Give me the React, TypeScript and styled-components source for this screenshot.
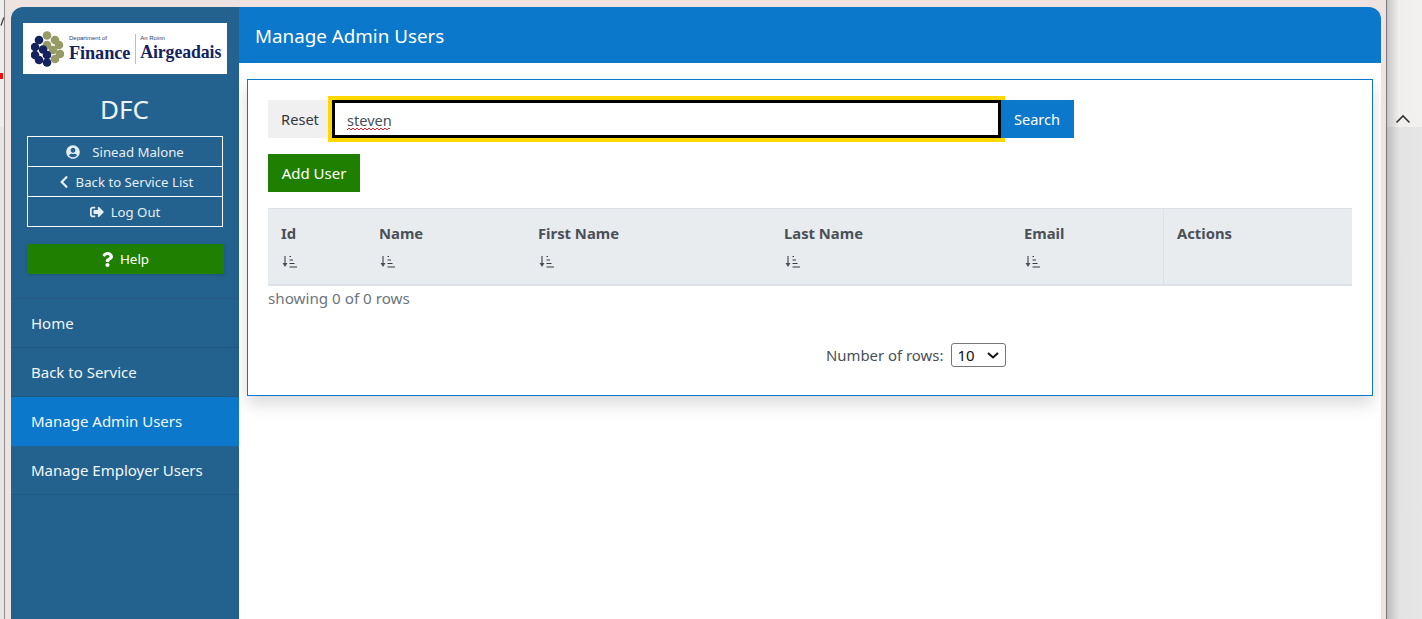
import React from "react";
import styled, { createGlobalStyle } from "styled-components";
import { FaUserCircle, FaChevronLeft, FaSignOutAlt, FaQuestion } from "react-icons/fa";

const Global = createGlobalStyle`
  html, body { margin: 0; padding: 0; height: 619px; overflow: hidden; background: #efe3e1; }
  #root { height: 619px; }
  * { box-sizing: border-box; }
`;

const Page = styled.div`
  position: relative;
  display: flex;
  width: 1422px;
  height: 619px;
  overflow: hidden;
  font-family: "Noto Sans", "Open Sans", sans-serif;
  font-size: 15px;
`;
const LeftStrip = styled.div`
  width: 5px;
  flex: none;
  display: flex;
  flex-direction: column;
  border-right: 1px solid #8f8f8f;
`;
const LeftTop = styled.div`
  height: 127px;
  background: #eeeeec;
`;
const LeftBottom = styled.div`
  flex: 1;
  background: #e6e6e6;
`;
const RedMark = styled.div`
  position: absolute;
  left: 0;
  top: 73px;
  width: 3px;
  height: 6px;
  background: #e81010;
`;
const CornerMark = styled.svg`
  position: absolute;
  left: 0;
  top: 17px;
`;
const Stage = styled.div`
  flex: 1;
  min-width: 0;
  padding: 7px 5px 0 6px;
  background: #efe3e1;
`;
const RightStrip = styled.div`
  width: 36px;
  flex: none;
  display: flex;
  flex-direction: column;
  border-left: 1px solid #77777a;
`;
const RightTop = styled.div`
  height: 127px;
  padding: 0 0 3px 8px;
  display: flex;
  align-items: flex-end;
  background: linear-gradient(90deg, #c6c6c6 0, #f0efee 12px, #f3f1f0 100%);
`;
const RightBottom = styled.div`
  flex: 1;
  background: linear-gradient(90deg, #bdbdbd 0, #e3e3e3 12px, #e6e6e6 100%);
`;
const Window = styled.div`
  display: flex;
  height: 100%;
  border-radius: 12px 12px 0 0;
  overflow: hidden;
  background: #fff;
`;
const Sidebar = styled.aside`
  width: 228px;
  flex: none;
  padding-top: 16px;
  background: #23628f;
  color: #fff;
  display: flex;
  flex-direction: column;
`;
const LogoBox = styled.div`
  width: 204px;
  height: 51px;
  margin-left: 12px;
  background: #fff;
  display: flex;
  align-items: center;
  padding-left: 8px;
  color: #14235f;
`;
const LogoWords = styled.div<{ $gap: number }>`
  display: flex;
  flex-direction: column;
  margin-left: ${(p) => p.$gap}px;
  line-height: 1;
`;
const LogoSmall = styled.span`
  font-family: "Liberation Sans", sans-serif;
  font-size: 6px;
  margin-bottom: 3px;
  color: #2c3a72;
`;
const LogoBig = styled.span<{ $size: number }>`
  font-family: "Liberation Serif", serif;
  font-size: ${(p) => p.$size}px;
  font-weight: 700;
  letter-spacing: -0.1px;
`;
const LogoRule = styled.div`
  width: 1px;
  height: 30px;
  margin-left: 5px;
  background: #b9bfce;
`;
const Brand = styled.div`
  margin-top: 17px;
  text-align: center;
  font-size: 26px;
  line-height: 36px;
  color: #eef3f7;
  padding-right: 1px;
`;
const UserBox = styled.div`
  margin: 9px 0 0 16px;
  width: 196px;
  border: 1px solid #fff;
  display: flex;
  flex-direction: column;
`;
const UserRow = styled.div`
  height: 30px;
  display: flex;
  align-items: center;
  justify-content: center;
  gap: 5px;
  font-size: 13.2px;
  color: #e6eef5;
  &:first-child { height: 29px; }
  & + & { border-top: 1px solid #fff; }
`;
const UserIcon = styled.span<{ $gap?: number; $size?: number }>`
  display: inline-flex;
  margin-right: ${(p) => p.$gap ?? 0}px;
  font-size: ${(p) => p.$size ?? 13}px;
`;
const HelpButton = styled.div`
  margin: 17px 0 0 16px;
  width: 197px;
  height: 30px;
  background: #1f7f00;
  color: #fff;
  font-size: 13.4px;
  display: flex;
  align-items: center;
  justify-content: center;
  gap: 5px;
  padding-right: 2px;
  box-shadow: 0 1px 3px rgba(0,0,0,.15);
`;
const Menu = styled.nav`
  margin-top: 24px;
  border-top: 1px solid #2a5a80;
`;
const MenuItem = styled.div<{ $active?: boolean }>`
  height: 49px;
  padding-left: 20px;
  display: flex;
  align-items: center;
  background: ${(p) => (p.$active ? "#0b78cc" : "#23628f")};
  border-bottom: 1px solid ${(p) => (p.$active ? "#0b78cc" : "#1f5880")};
  color: #f2f7fb;
  font-size: 15px;
`;
const Main = styled.main`
  flex: 1;
  min-width: 0;
  display: flex;
  flex-direction: column;
`;
const Header = styled.header`
  height: 56px;
  padding: 2px 0 0 16px;
  display: flex;
  align-items: center;
  background: #0b78cc;
  color: #fff;
  font-size: 18.800px;
`;
const Card = styled.section`
  margin: 16px 8px 0;
  height: 317px;
  border: 1px solid #0b78cc;
  padding: 20px;
  background: #fff;
  box-shadow: 0 8px 16px rgba(0,0,0,.15);
`;
const SearchRow = styled.div`
  display: flex;
  height: 38px;
`;
const ResetButton = styled.div`
  width: 64px;
  background: #f0f0f0;
  display: flex;
  align-items: center;
  justify-content: center;
  color: #33363a;
  font-size: 14.6px;
`;
const InputWrap = styled.div`
  position: relative;
  width: 669px;
  height: 38px;
`;
const SearchInput = styled.input`
  display: block;
  width: 100%;
  height: 38px;
  border: 3px solid #000;
  outline: 4px solid #ffd800;
  outline-offset: 0;
  padding: 1px 12px 0;
  background: #fff;
  color: #495057;
  font: inherit;
  font-size: 14.6px;
`;
const Squiggle = styled.svg`
  position: absolute;
  left: 15px;
  top: 27px;
`;
const SearchButton = styled.div`
  position: relative;
  width: 73px;
  padding-right: 1px;
  background: #0b78cc;
  color: #fff;
  display: flex;
  align-items: center;
  justify-content: center;
  font-size: 14.6px;
`;
const AddButton = styled.div`
  margin-top: 16px;
  width: 92px;
  height: 38px;
  background: #1f7f00;
  color: #fff;
  display: flex;
  align-items: center;
  justify-content: center;
  font-size: 15px;
`;
const Table = styled.div`
  margin-top: 16px;
  display: grid;
  grid-template-columns: 98px 159px 246px 240px 152px 1fr;
  height: 78px;
  background: #e9ecef;
  border-top: 1px solid #dee2e6;
  border-bottom: 2px solid #dee2e6;
`;
const HeadCell = styled.div<{ $divided?: boolean }>`
  padding: 13px 0 0 13px;
  color: #495057;
  font-weight: 700;
  font-size: 14.8px;
  line-height: 22px;
  ${(p) => (p.$divided ? "border-left: 1px solid #dee2e6;" : "")}
`;
const SortWrap = styled.div`
  margin-top: 10px;
  height: 15px;
  display: flex;
`;
const Showing = styled.div`
  margin-top: 2px;
  color: #6c757d;
  font-size: 15.2px;
  line-height: 20px;
`;
const Pager = styled.div`
  margin: 35px 0 0 558px;
  display: flex;
  align-items: center;
  gap: 8px;
  color: #495057;
  font-size: 14.900px;
`;
const RowsSelect = styled.select`
  appearance: none;
  width: 55px;
  height: 24px;
  padding: 0 0 0 5px;
  font: inherit;
  font-size: 15px;
  color: #111;
  background: #fff url("data:image/svg+xml,%3Csvg xmlns='http://www.w3.org/2000/svg' width='12' height='7' viewBox='0 0 12 7'%3E%3Cpath d='M1 1l5 4.500L11 1' fill='none' stroke='%23111' stroke-width='2'/%3E%3C/svg%3E") no-repeat right 6px center;
  border: 1px solid #767676;
  border-radius: 3px;
`;
const Chevron = styled.svg`
  display: block;
`;

const SortIcon = () => (
  <svg width="17" height="15" viewBox="0 0 17 15" fill="none">
    <path d="M4 2v8" stroke="#6b7177" strokeWidth="1.5" />
    <path d="M1.500 9L4 13l2.500-4z" fill="#495057" />
    <path d="M8.500 2.500h1.500M8.500 6h3.500M8.500 9.500h5M8.500 13h7.500" stroke="#343a40" strokeWidth="1" />
  </svg>
);

const NAVY = "#14235f";
const OLIVE = "#969a66";
const hexes: [number, number, string][] = [
  [16, 4.5, OLIVE],
  [8, 9, NAVY], [24, 9, OLIVE],
  [16, 14, OLIVE],
  [4, 16, NAVY], [28, 14, OLIVE],
  [12, 18.500, NAVY], [22, 19, OLIVE],
  [4, 24, NAVY], [29, 23, OLIVE],
  [16, 24, NAVY],
  [8, 29, NAVY], [24, 28, OLIVE],
  [16, 31.500, NAVY],
];

const LogoMark = () => (
  <svg width="33" height="36" viewBox="0 0 33 36">
    {hexes.map(([x, y, c]) => (
      <circle key={`${x}-${y}`} cx={x} cy={y} r="4.300" fill={c} />
    ))}
  </svg>
);

const headers = ["Id", "Name", "First Name", "Last Name", "Email"];

export default function App() {
  return (
    <Page>
      <Global />
      <LeftStrip>
        <LeftTop />
        <LeftBottom />
      </LeftStrip>
      <RedMark />
      <CornerMark width="5" height="9" viewBox="0 0 5 9" fill="none">
        <path d="M1 8.500L3.800 0.500" stroke="#444" strokeWidth="1.300" />
      </CornerMark>
      <Stage>
        <Window>
          <Sidebar>
            <LogoBox>
              <LogoMark />
              <LogoWords $gap={5}>
                <LogoSmall>Department of</LogoSmall>
                <LogoBig $size={18.3}>Finance</LogoBig>
              </LogoWords>
              <LogoRule />
              <LogoWords $gap={4}>
                <LogoSmall>An Roinn</LogoSmall>
                <LogoBig $size={17.800}>Airgeadais</LogoBig>
              </LogoWords>
            </LogoBox>
            <Brand>DFC</Brand>
            <UserBox>
              <UserRow>
                <UserIcon $gap={7} $size={14}><FaUserCircle /></UserIcon>
                Sinead Malone
              </UserRow>
              <UserRow>
                <UserIcon $size={14}><FaChevronLeft /></UserIcon>
                Back to Service List
              </UserRow>
              <UserRow>
                <UserIcon $gap={2} $size={14}><FaSignOutAlt /></UserIcon>
                Log Out
              </UserRow>
            </UserBox>
            <HelpButton>
              <UserIcon $size={15}><FaQuestion /></UserIcon>
              Help
            </HelpButton>
            <Menu>
              <MenuItem>Home</MenuItem>
              <MenuItem>Back to Service</MenuItem>
              <MenuItem $active>Manage Admin Users</MenuItem>
              <MenuItem>Manage Employer Users</MenuItem>
            </Menu>
          </Sidebar>
          <Main>
            <Header>Manage Admin Users</Header>
            <Card>
              <SearchRow>
                <ResetButton>Reset</ResetButton>
                <InputWrap>
                  <SearchInput readOnly value="steven" />
                  <Squiggle width="45" height="4" viewBox="0 0 45 4" fill="none">
                    <path
                      d="M0 3l2-2 2 2 2-2 2 2 2-2 2 2 2-2 2 2 2-2 2 2 2-2 2 2 2-2 2 2 2-2 2 2 2-2 2 2 2-2 2 2 2-2 1 1"
                      stroke="#e8202a"
                      strokeWidth="1"
                    />
                  </Squiggle>
                </InputWrap>
                <SearchButton>Search</SearchButton>
              </SearchRow>
              <AddButton>Add User</AddButton>
              <Table>
                {headers.map((h) => (
                  <HeadCell key={h}>
                    {h}
                    <SortWrap><SortIcon /></SortWrap>
                  </HeadCell>
                ))}
                <HeadCell $divided>Actions</HeadCell>
              </Table>
              <Showing>showing 0 of 0 rows</Showing>
              <Pager>
                Number of rows:
                <RowsSelect defaultValue="10">
                  <option>10</option>
                  <option>25</option>
                  <option>50</option>
                </RowsSelect>
              </Pager>
            </Card>
          </Main>
        </Window>
      </Stage>
      <RightStrip>
        <RightTop>
          <Chevron width="16" height="10" viewBox="0 0 16 10" fill="none">
            <path d="M1.500 8.500L8 2l6.500 6.500" stroke="#333" strokeWidth="1.600" />
          </Chevron>
        </RightTop>
        <RightBottom />
      </RightStrip>
    </Page>
  );
}
